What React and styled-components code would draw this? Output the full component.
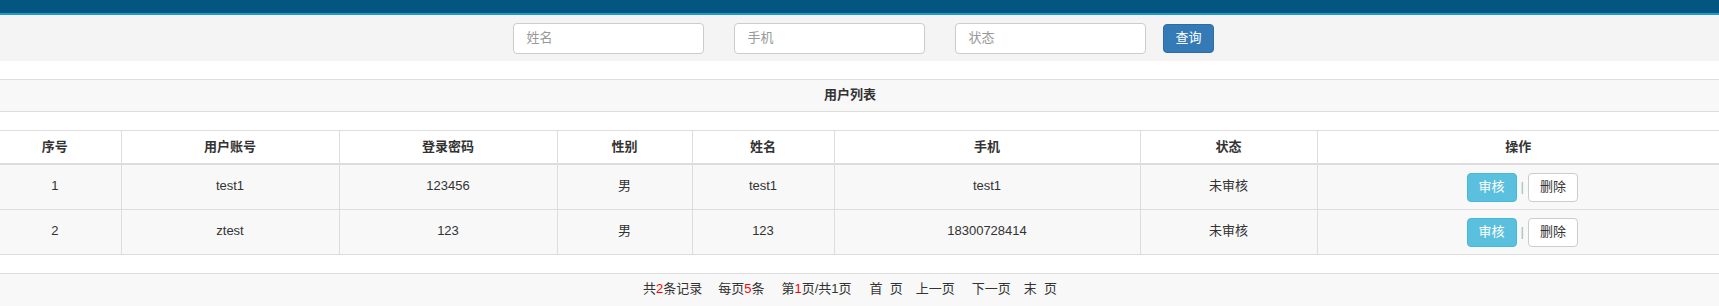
import React from "react";
import styled, { createGlobalStyle } from "styled-components";

const GlobalStyle = createGlobalStyle`
  html, body {
    margin: 0;
    padding: 0;
    background: #fff;
  }
  body {
    font-family: "Liberation Sans", Arial, "Noto Sans CJK SC", sans-serif;
    font-size: 13px;
    line-height: 18px;
    color: #333;
  }
`;

const TopBar = styled.div`
  height: 13px;
  background: #02567f;
  border-bottom: 2px solid #1a9ad6;
`;

const SearchBar = styled.form`
  height: 46px;
  background: #f4f4f4;
  display: flex;
  align-items: center;
  justify-content: center;
  gap: 17px;
  padding-left: 8px;
`;

const Fields = styled.div`
  display: flex;
  gap: 30px;
`;

const Input = styled.input`
  box-sizing: border-box;
  width: 191px;
  height: 31px;
  padding: 0 12px 1px;
  border: 1px solid #ccc;
  border-radius: 4px;
  background: #fff;
  font-family: inherit;
  font-size: 13px;
  color: #555;
  outline: none;
  &::placeholder {
    color: #999;
  }
`;

const Button = styled.button`
  box-sizing: border-box;
  height: 29px;
  padding: 0 11px 1px;
  border-radius: 4px;
  font-family: inherit;
  font-size: 13px;
  line-height: 18px;
  cursor: pointer;
  border: 1px solid ${(p) => (p.$kind === "primary" ? "#2e6da4" : p.$kind === "info" ? "#46b8da" : "#ccc")};
  background: ${(p) => (p.$kind === "primary" ? "#337ab7" : p.$kind === "info" ? "#5bc0de" : "#fff")};
  color: ${(p) => (p.$kind === "default" ? "#333" : "#fff")};
`;

const PanelHeading = styled.div`
  box-sizing: border-box;
  margin-top: 18px;
  height: 33px;
  padding: 0 19px 2px 0;
  border-top: 1px solid #ddd;
  border-bottom: 1px solid #ddd;
  background: #f8f8f8;
  display: flex;
  align-items: center;
  justify-content: center;
  font-weight: bold;
`;

const Table = styled.table`
  margin-top: 18px;
  width: 100%;
  border-collapse: collapse;
  table-layout: fixed;
  text-align: center;
`;

const Th = styled.th`
  height: 31px;
  padding: 0 0 1px;
  font-weight: bold;
  border: 1px solid #ddd;
  border-bottom: 2px solid #ddd;
  background: #fff;
  &:first-child { border-left: none; padding-right: 11px; }
  &:last-child { border-right: none; }
`;

const Td = styled.td`
  height: 41px;
  padding: 0 0 3px;
  border: 1px solid #ddd;
  background: #f8f8f8;
  &:first-child { border-left: none; padding-right: 11px; }
  &:last-child { border-right: none; }
`;

const Actions = styled.div`
  display: flex;
  align-items: center;
  justify-content: center;
  padding-left: 8px;
  margin-bottom: -3px;
`;

const Sep = styled.span`
  margin: 0 4px;
  color: #9bb;
`;

const Footer = styled.div`
  box-sizing: border-box;
  margin-top: 18px;
  height: 33px;
  padding: 0 19px 3px 0;
  border-top: 1px solid #ddd;
  background: #f8f8f8;
  display: flex;
  align-items: center;
  justify-content: center;
`;

const PageItem = styled.span`
  margin-left: ${(p) => p.$gap || 0}px;
  white-space: pre;
`;

const Red = styled.span`
  color: #f00;
`;

const columns = [
  ["序号", 121],
  ["用户账号", 218],
  ["登录密码", 218],
  ["性别", 135],
  ["姓名", 142],
  ["手机", 306],
  ["状态", 177],
  ["操作", 402],
];

const users = [
  { id: 1, account: "test1", pwd: "123456", sex: "男", name: "test1", phone: "test1", status: "未审核" },
  { id: 2, account: "ztest", pwd: "123", sex: "男", name: "123", phone: "18300728414", status: "未审核" },
];

export default function App() {
  return (
    <>
      <GlobalStyle />
      <TopBar />
      <SearchBar onSubmit={(e) => e.preventDefault()}>
        <Fields>
          <Input placeholder="姓名" />
          <Input placeholder="手机" />
          <Input placeholder="状态" />
        </Fields>
        <Button $kind="primary">查询</Button>
      </SearchBar>
      <PanelHeading>用户列表</PanelHeading>
      <Table>
        <colgroup>
          {columns.map(([label, w]) => (
            <col key={label} style={{ width: w }} />
          ))}
        </colgroup>
        <thead>
          <tr>
            {columns.map(([label]) => (
              <Th key={label}>{label}</Th>
            ))}
          </tr>
        </thead>
        <tbody>
          {users.map((u) => (
            <tr key={u.id}>
              <Td>{u.id}</Td>
              <Td>{u.account}</Td>
              <Td>{u.pwd}</Td>
              <Td>{u.sex}</Td>
              <Td>{u.name}</Td>
              <Td>{u.phone}</Td>
              <Td>{u.status}</Td>
              <Td>
                <Actions>
                  <Button $kind="info">审核</Button>
                  <Sep>|</Sep>
                  <Button $kind="default">删除</Button>
                </Actions>
              </Td>
            </tr>
          ))}
        </tbody>
      </Table>
      <Footer>
        <PageItem>共<Red>2</Red>条记录</PageItem>
        <PageItem $gap={16}>每页<Red>5</Red>条</PageItem>
        <PageItem $gap={17}>第<Red>1</Red>页/共1页</PageItem>
        <PageItem $gap={18}>首  页</PageItem>
        <PageItem $gap={13}>上一页</PageItem>
        <PageItem $gap={17}>下一页</PageItem>
        <PageItem $gap={13}>末  页</PageItem>
      </Footer>
    </>
  );
}
